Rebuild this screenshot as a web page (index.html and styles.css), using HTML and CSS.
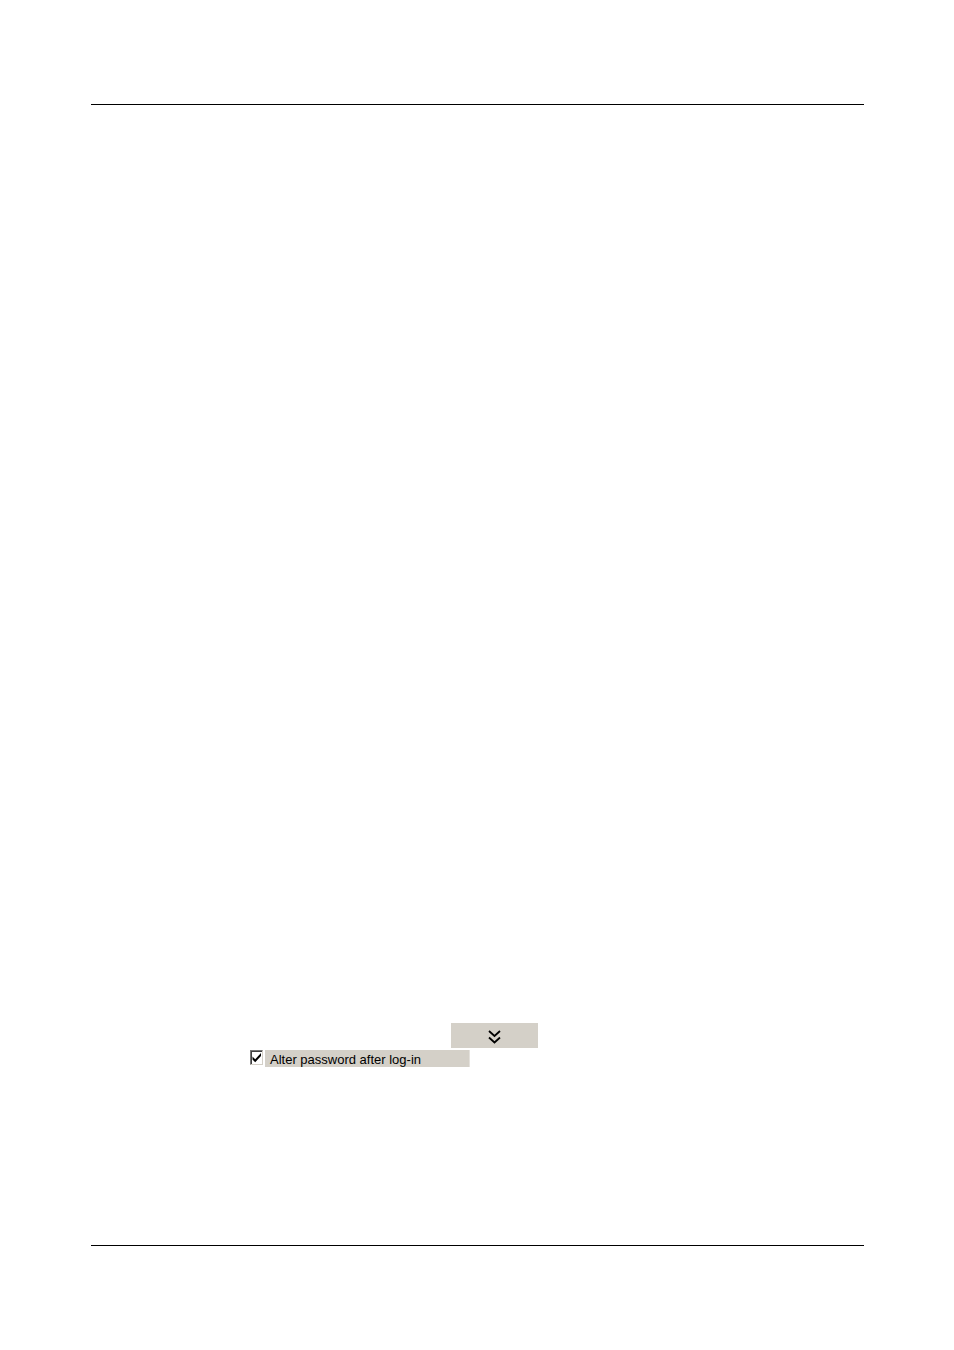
FILE: index.html
```html
<!DOCTYPE html>
<html lang="en">
<head>
<meta charset="utf-8">
<meta name="viewport" content="width=device-width, initial-scale=1">
<title>Alter password after log-in</title>
<link rel="stylesheet" href="styles.css">
</head>
<body>
<div class="page">
  <hr class="rule">
  <main class="content">
    <button class="expand" type="button" aria-label="Show more">
      <svg class="chevrons" viewBox="0 0 14 14" aria-hidden="true">
        <path d="M1 1 6.500 6 12 1M1 7.500 6.500 12.500 12 7.500"/>
      </svg>
    </button>
    <div class="option">
      <input class="tick" type="checkbox" id="alter" checked>
      <label class="caption" for="alter">Alter password after log-in</label>
    </div>
  </main>
  <hr class="rule">
</div>
</body>
</html>
```

FILE: styles.css
```css
* {
  box-sizing: border-box;
}

body {
  margin: 0;
  background: #fff;
  color: #000;
}

.page {
  display: flex;
  flex-direction: column;
  min-height: 100vh;
  padding: 104px 90px 104px 91px;
}

.rule {
  width: 100%;
  height: 1px;
  margin: 0;
  border: 0;
  background: #000;
}

.content {
  display: flex;
  flex: 1;
  flex-direction: column;
  justify-content: flex-end;
  align-items: flex-start;
  gap: 2px;
  padding: 0 0 178px 159px;
}

.expand {
  display: flex;
  align-items: center;
  justify-content: center;
  width: 87px;
  height: 25px;
  margin-left: 201px;
  padding: 2px 0 0;
  border: 0;
  background: #d4d0c8;
}

.chevrons {
  width: 14px;
  height: 14px;
  fill: none;
  stroke: #000;
  stroke-width: 1.8;
}

.option {
  display: flex;
  align-items: flex-start;
  gap: 2px;
}

.tick {
  appearance: none;
  width: 13px;
  height: 15px;
  margin: 0;
  border: 1px solid;
  border-color: #777 #d4d0c8 #d4d0c8 #777;
  box-shadow: inset 1px 1px #404040;
  background: #fff;
}

.tick:checked {
  background: #fff url("data:image/svg+xml,%3Csvg xmlns='http://www.w3.org/2000/svg' viewBox='0 0 11 13'%3E%3Cpath d='M1.500 5.500v3L4.200 11.300 10 5V2L4.200 8.200z'/%3E%3C/svg%3E") center / 11px 13px no-repeat;
}

.caption {
  width: 205px;
  padding: 2px 0 0 5px;
  border-right: 1px solid #e4e1dc;
  background: #d4d0c8;
  font: 13px/15px "Liberation Sans", Arial, sans-serif;
}
```
